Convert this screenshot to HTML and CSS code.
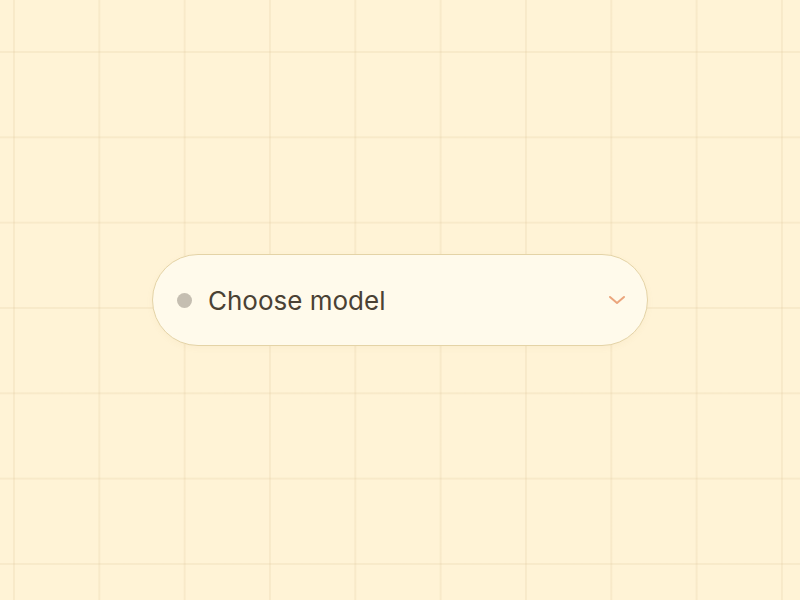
FILE: index.html
```html
<!DOCTYPE html>
<html lang="en">

<head>
    <meta charset="UTF-8">
    <meta name="viewport" content="width=device-width, initial-scale=1.0">
    <title>Choose model</title>
    <link rel="stylesheet" href="styles.css">
</head>

<body>
    <div class="select">
        <span class="dot"></span>
        <span class="label">Choose model</span>
        <svg class="chevron" width="18" height="10" viewBox="0 0 18 10">
            <path d="M2 2 L9 8 L16 2" fill="none" stroke="#eba57c" stroke-width="2" stroke-linecap="round" stroke-linejoin="round" />
        </svg>
    </div>
</body>

</html>
```

FILE: styles.css
```css
* {
    margin: 0;
    padding: 0;
    box-sizing: border-box;
}

body {
    font-family: Inter, 'Noto Sans', sans-serif;
    height: 100vh;
    display: flex;
    justify-content: center;
    align-items: center;
    background-color: #fff3d6;
    background-image:
        linear-gradient(to right, rgba(220, 196, 150, 0.2) 2px, transparent 2px),
        linear-gradient(to bottom, rgba(220, 196, 150, 0.2) 2px, transparent 2px);
    background-size: 85.333px 85.333px;
    background-position: 13px 51px;
}

.select {
    width: 496px;
    height: 92px;
    border-radius: 46px;
    background-color: #fffaeb;
    border: 1.5px solid #e4d3a6;
    box-shadow: 0 2px 6px rgba(180, 150, 90, 0.06);
    display: flex;
    align-items: center;
    padding: 0 21px 0 24px;
}

.dot {
    width: 15px;
    height: 15px;
    border-radius: 50%;
    background-color: #c5beb1;
    flex-shrink: 0;
}

.label {
    margin-left: 16px;
    font-size: 26px;
    font-weight: 400;
    color: #4a4134;
    flex: 1;
}

.chevron {
    flex-shrink: 0;
}
```
